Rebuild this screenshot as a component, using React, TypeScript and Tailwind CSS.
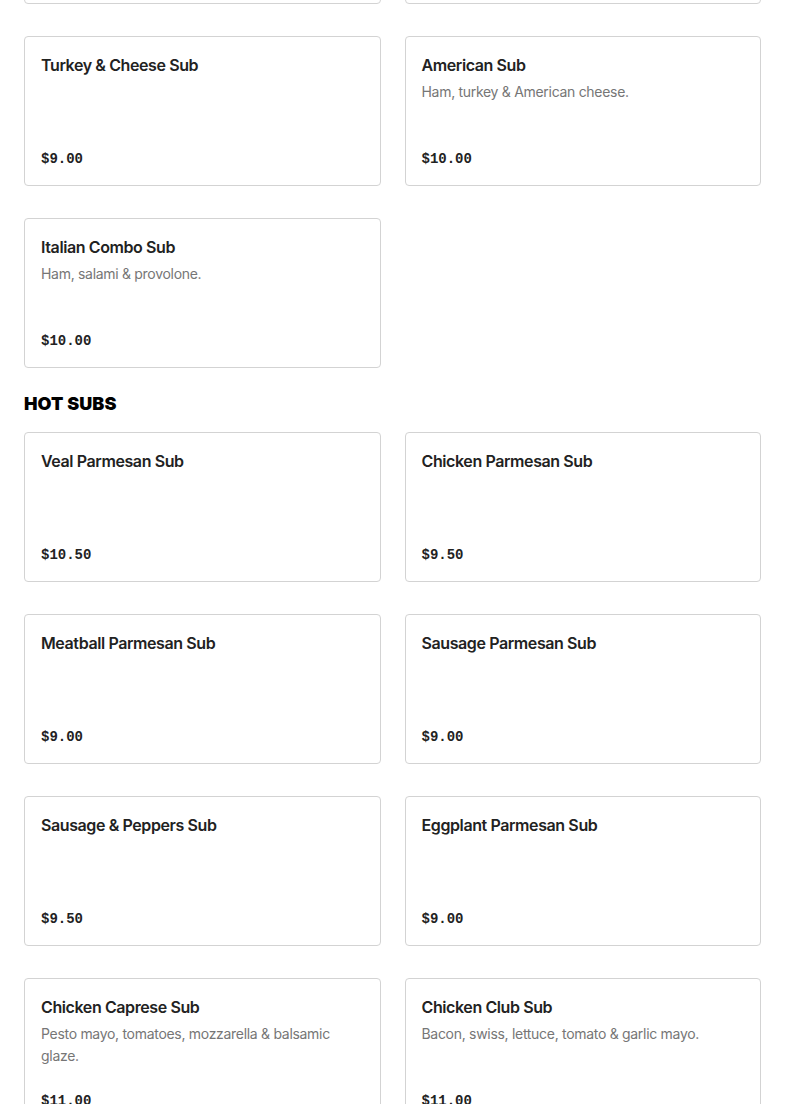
type Item = {
  name: string;
  price: string;
  description?: string;
};

type Section = {
  title?: string;
  items: Item[];
};

const sections: Section[] = [
  {
    items: [
      {
        name: "Turkey & Cheese Sub",
        price: "$9.00",
      },
      {
        name: "American Sub",
        price: "$10.00",
        description: "Ham, turkey & American cheese.",
      },
      {
        name: "Italian Combo Sub",
        price: "$10.00",
        description: "Ham, salami & provolone.",
      },
    ],
  },
  {
    title: "Hot Subs",
    items: [
      { name: "Veal Parmesan Sub", price: "$10.50" },
      { name: "Chicken Parmesan Sub", price: "$9.50" },
      { name: "Meatball Parmesan Sub", price: "$9.00" },
      { name: "Sausage Parmesan Sub", price: "$9.00" },
      { name: "Sausage & Peppers Sub", price: "$9.50" },
      { name: "Eggplant Parmesan Sub", price: "$9.00" },
      {
        name: "Chicken Caprese Sub",
        price: "$11.00",
        description: "Pesto mayo, tomatoes, mozzarella & balsamic glaze.",
      },
      {
        name: "Chicken Club Sub",
        price: "$11.00",
        description: "Bacon, swiss, lettuce, tomato & garlic mayo.",
      },
    ],
  },
];

const MenuCard = ({ item }: { item: Item }) => {
  return (
    <div className="flex flex-col rounded-[4px] border border-[#d3d3d3] bg-white p-4">
      <h3 className="text-[16px] leading-6 font-semibold tracking-[-0.4px] text-[#222222]">
        {item.name}
      </h3>
      <p className="mt-1 min-h-[44px] text-[14px] leading-[22px] tracking-[-0.3px] text-[#767676]">
        {item.description}
      </p>
      <span
        className="mt-6 text-[14px] leading-5 font-bold text-[#222222]"
        style={{ fontFamily: '"Liberation Mono", monospace' }}
      >
        {item.price}
      </span>
    </div>
  );
};

export default function App() {
  return (
    <div
      className="min-h-screen bg-white px-6 pb-10"
      style={{ fontFamily: 'Inter, "Noto Sans", sans-serif' }}
    >
      {/* tail of the row scrolled above the fold */}
      <div className="-mt-[146px] mb-8 grid grid-cols-2 gap-x-6">
        <div className="h-[150px] rounded-[4px] border border-[#d3d3d3]" />
        <div className="h-[150px] rounded-[4px] border border-[#d3d3d3]" />
      </div>
      {sections.map((section, i) => (
        <section key={i}>
          {section.title && (
            <h2 className="mt-6 mb-4 text-[18px] leading-6 font-black tracking-[0.1px] text-black uppercase">
              {section.title}
            </h2>
          )}
          <div className="grid grid-cols-2 gap-x-6 gap-y-8">
            {section.items.map((item) => (
              <MenuCard key={item.name} item={item} />
            ))}
          </div>
        </section>
      ))}
    </div>
  );
}
